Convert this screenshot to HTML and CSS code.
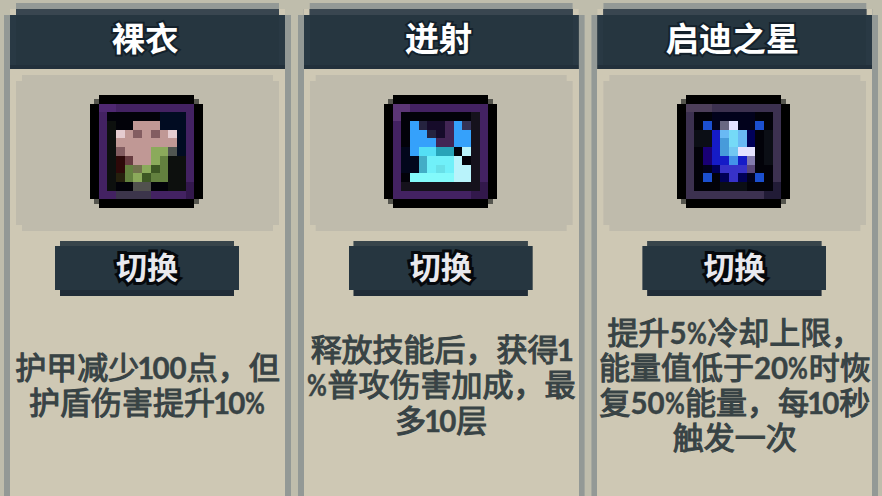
FILE: index.html
```
<!DOCTYPE html>
<html lang="zh-CN">
	<head>
		<meta charset="UTF-8">
		<title>技能切换</title>
		<link rel="stylesheet" href="styles.css">
	</head>
	<body>
		<!--==== Shared icon frame, on a grid of 13 x 13 blocks ====-->
		<svg class="defs" width="0" height="0">
			<symbol id="frame" viewBox="0 0 13 13">
				<path fill="#55554e" d="M.5 .5h12v12h-12z"/>
				<path fill="#000" d="M1 0h11v13h-11zM0 1h13v11h-13z"/>
				<path fill="currentColor" d="M1 1h11v11h-11z"/>
				<path fill="#020209" d="M2 2h9v9h-9z"/>
			</symbol>
		</svg>
		
		<main class="cards">
			<section class="card">
				<h2>裸衣</h2>
				<div class="picture">
					<svg class="icon purple" viewBox="0 0 13 13">
						<use href="#frame"/>
						<path fill="#4f2872" d="M1 1h2v1h-2z"/>
						<path fill="#33184d" d="M11 10h1v2h-1z"/>
						<path fill="#010c22" d="M8 2h3v2h-3zM10 4h1v3h-1z"/>
						<path fill="#0d100e" d="M2 3h1v8h-1zM9 7h2v4h-2z"/>
						<path fill="#c09895" d="M5 3h3v1h-3zM4 4h5v2h-5zM9 5h1v1h-1zM3 5h1v1h-1zM4 6h3v1h-3zM5 7h2v1h-2z"/>
						<path fill="#e5ccd0" d="M3 4h1v1h-1zM9 4h1v1h-1z"/>
						<path fill="#835d61" d="M5 4h1v1h-1zM7 4h1v1h-1zM3 6h1v1h-1z"/>
						<path fill="#673c40" d="M4 7h1v1h-1z"/>
						<path fill="#2d0909" d="M3 7h1v2h-1z"/>
						<path fill="#25200d" d="M3 9h1v1h-1z"/>
						<path fill="#505551" d="M9 6h1v1h-1z"/>
						<path fill="#8baa5b" d="M7 6h2v1h-2zM7 7h1v1h-1zM6 8h1v1h-1zM5 9h1v1h-1z"/>
						<path fill="#63813f" d="M8 7h1v3h-1zM4 8h1v2h-1zM7 9h1v1h-1z"/>
						<path fill="#71734c" d="M5 8h1v1h-1z"/>
						<path fill="#3d5724" d="M7 8h1v1h-1zM6 9h1v1h-1z"/>
						<path fill="#51514e" d="M5 10h2v1h-2z"/>
						<path fill="#3c354b" d="M3 11h4v1h-4z"/>
					</svg>
				</div>
				<button type="button"><span>切换</span></button>
				<p>护甲减少<b><i>1</i>00</b>点，但<br>护盾伤害提升<b><i>1</i>0<u>%</u></b></p>
			</section>
			
			<section class="card">
				<h2>迸射</h2>
				<div class="picture">
					<svg class="icon purple" viewBox="0 0 13 13">
						<use href="#frame"/>
						<path fill="#5c3676" d="M1 1h2v1h-1v1h-1z"/>
						<path fill="#32184b" d="M10 11h2v1h-2zM11 10h1v1h-1z"/>
						<path fill="#15121c" d="M10 2h1v9h-9v-1h8z"/>
						<path fill="#02071c" d="M2 6h1v3h-1zM3 7h1v2h-1z"/>
						<path fill="#35a1fb" d="M3 3h1v4h-1zM4 4h1v2h-1zM5 5h1v1h-1zM8 3h1v3h-1zM9 4h1v2h-1z"/>
						<path fill="#25233f" d="M4 3h1v1h-1zM5 4h1v1h-1z"/>
						<path fill="#160b2a" d="M5 3h2v1h-2zM6 4h1v1h-1z"/>
						<path fill="#422554" d="M7 3h1v3h-1zM6 5h1v1h-1z"/>
						<path fill="#353356" d="M9 3h1v1h-1z"/>
						<path fill="#54dff5" d="M4 6h2v1h-2z"/>
						<path fill="#27a3b8" d="M6 6h2v1h-2z"/>
						<path fill="#43adc6" d="M4 7h1v2h-1z"/>
						<path fill="#70f0f9" d="M5 7h3v2h-3z"/>
						<path fill="#68e0e8" d="M6 8h1v1h-1z"/>
						<path fill="#83fafb" d="M3 9h5v1h-5z"/>
						<path fill="#b9f3fb" d="M9 6h1v1h-1zM8 7h1v3h-1zM9 8h1v2h-1z"/>
					</svg>
				</div>
				<button type="button"><span>切换</span></button>
				<p>释放技能后，获得<b><i>1</i></b><br><b><u>%</u></b>普攻伤害加成，最<br>多<b><i>1</i>0</b>层</p>
			</section>
			
			<section class="card">
				<h2>启迪之星</h2>
				<div class="picture">
					<svg class="icon slate" viewBox="0 0 13 13">
						<use href="#frame"/>
						<path fill="#4d3f5a" d="M1 1h3v1h-3z"/>
						<path fill="#211b36" d="M10 11h1v-1h1v2h-2z"/>
						<path fill="#02021c" d="M4 2h5v2h-5zM3 8h1v1h-1zM8 9h1v1h-1z"/>
						<path fill="#0b0e15" d="M2 4h2v2h-2zM10 4h1v4h-1zM5 10h3v1h-3z"/>
						<path fill="#000057" d="M8 4h1v3h-1zM4 8h1v1h-1zM5 9h1v1h-1zM7 9h1v1h-1z"/>
						<path fill="#1b4fd0" d="M3 3h1v1h-1zM9 3h1v1h-1zM3 9h1v1h-1zM9 9h1v1h-1z"/>
						<path fill="#696782" d="M5 3h1v1h-1z"/>
						<path fill="#e4e2ff" d="M6 3h1v1h-1zM7 6h2v1h-2z"/>
						<path fill="#190075" d="M3 6h1v2h-1z"/>
						<path fill="#151bc7" d="M4 4h1v4h-1zM5 7h3v1h-3z"/>
						<path fill="#69b9f4" d="M5 4h1v1h-1zM7 4h1v2h-1z"/>
						<path fill="#75daf7" d="M6 4h1v2h-1z"/>
						<path fill="#479bda" d="M5 5h1v2h-1z"/>
						<path fill="#72c7f2" d="M6 6h1v1h-1z"/>
						<path fill="#4392e9" d="M6 7h1v1h-1z"/>
						<path fill="#837bae" d="M8 7h1v1h-1z"/>
						<path fill="#3732c8" d="M5 8h3v1h-3zM6 9h1v1h-1z"/>
						<path fill="#594779" d="M8 8h1v1h-1z"/>
					</svg>
				</div>
				<button type="button"><span>切换</span></button>
				<p>提升<b>5<u>%</u></b>冷却上限，<br>能量值低于<b>20<u>%</u></b>时恢<br>复<b>50<u>%</u></b>能量，每<b><i>1</i>0</b>秒<br>触发一次</p>
			</section>
		</main>
	</body>
</html>
```

FILE: styles.css
```
* {
	box-sizing: border-box;
}
body {
	margin: 0;
	height: 496px;
	overflow: hidden;
	background-color: #BFBDAC;
	font-family: "Noto Sans CJK SC", sans-serif;
}
.defs {
	display: block;
}
.cards {
	display: grid;
	grid-template-columns: repeat(3, 287px);
	column-gap: 6.7px;
	padding: 3px 0 0 4px;
	height: 496px;
}
.card {
	display: flex;
	flex-direction: column;
	align-items: center;
	border: 6px solid #939996;
	border-bottom: none;
	background-color: #CEC8B4;
	clip-path: polygon(12px 0, calc(100% - 12px) 0, calc(100% - 12px) 6px, calc(100% - 6px) 6px, calc(100% - 6px) 12px, 100% 12px, 100% 100%, 0 100%, 0 12px, 6px 12px, 6px 6px, 12px 6px);
}

/* title bar */
h2 {
	align-self: stretch;
	height: 60px;
	margin: 0;
	padding-right: 5px;
	border-top: 6px solid #394650;
	border-bottom: 4px solid #22303B;
	background-color: #263640;
	box-shadow: inset 6px 0 #293944, inset -6px 0 #293944;
	color: #FFFFFF;
	font-size: 33.5px;
	font-weight: bold;
	line-height: 44px;
	text-align: center;
	-webkit-text-stroke: 4px #14212B;
	stroke-linejoin: round;
	paint-order: stroke fill;
	clip-path: polygon(6px 0, calc(100% - 6px) 0, calc(100% - 6px) 6px, 100% 6px, 100% 100%, 0 100%, 0 6px, 6px 6px);
}

/* icon area */
.picture {
	width: 263px;
	height: 156px;
	margin-top: 6px;
	padding: 20px 0 0 74px;
	background-color: #BFBBAC;
	clip-path: polygon(6px 0, calc(100% - 6px) 0, calc(100% - 6px) 6px, 100% 6px, 100% calc(100% - 6px), calc(100% - 6px) calc(100% - 6px), calc(100% - 6px) 100%, 6px 100%, 6px calc(100% - 6px), 0 calc(100% - 6px), 0 6px, 6px 6px);
}
.icon {
	display: block;
	width: 113px;
	height: 113px;
	shape-rendering: crispEdges;
}
.purple {
	color: #432262;
}
.slate {
	color: #3C3150;
}

button {
	width: 184px;
	height: 55px;
	margin: 10px 1px 0 0;
	padding: 0;
	border: none;
	border-top: 5px solid #38454B;
	border-bottom: 6px solid #212C37;
	background-color: #263640;
	color: #E9E9EE;
	font-family: inherit;
	font-size: 31px;
	font-weight: bold;
	line-height: 40px;
	-webkit-text-stroke: 6px #05080C;
	stroke-linejoin: round;
	paint-order: stroke fill;
	clip-path: polygon(5px 0, calc(100% - 5px) 0, calc(100% - 5px) 5px, 100% 5px, 100% calc(100% - 6px), calc(100% - 5px) calc(100% - 6px), calc(100% - 5px) 100%, 5px 100%, 5px calc(100% - 6px), 0 calc(100% - 6px), 0 5px, 5px 5px);
}
button span {
	display: block;
	height: 44px;
}

/* description */
p {
	display: flow-root;
	margin: auto 0;
	padding-bottom: 26px;
	color: #384345;
	font-size: 31px;
	line-height: 35.2px;
	text-align: center;
	white-space: nowrap;
	-webkit-text-stroke: 1.1px #384345;
	stroke-linejoin: round;
}
p b {
	font-family: Lato, sans-serif;
	font-size: 29.5px;
	line-height: 1;
	-webkit-text-stroke-width: 0.4px;
}
p i {
	margin: 0 -2px 0 -2px;
	font-style: normal;
}
p u {
	display: inline-block;
	width: 20.5px;
	text-decoration: none;
	transform: scaleX(0.82);
	transform-origin: left;
}
```
